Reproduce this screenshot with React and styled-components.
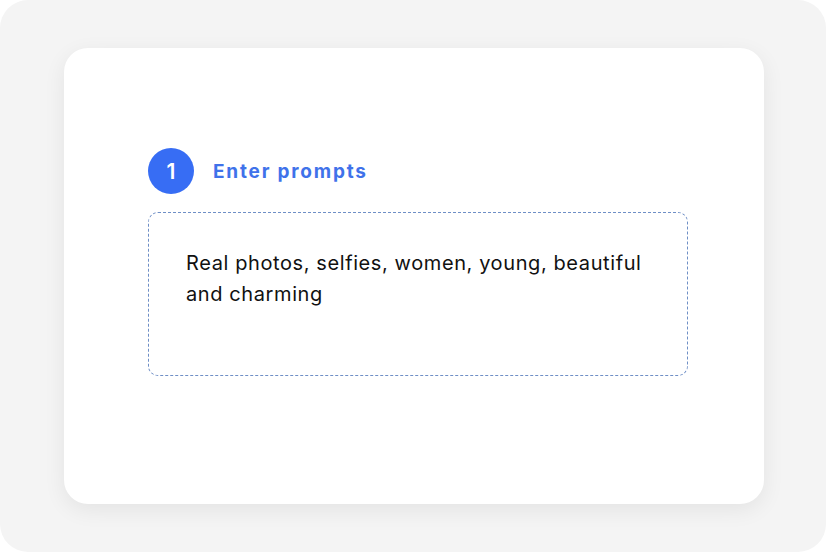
import React from "react";
import styled, { createGlobalStyle } from "styled-components";

const Global = createGlobalStyle`
  html, body { margin: 0; padding: 0; background: #ffffff; }
  body { font-family: Inter, "Noto Sans", sans-serif; }
`;

const Frame = styled.div`
  width: 826px;
  height: 552px;
  box-sizing: border-box;
  background: #f4f4f4;
  border-radius: 28px;
  padding: 48px 62px 48px 64px;
  display: flex;
`;

const Card = styled.div`
  width: 700px;
  height: 456px;
  box-sizing: border-box;
  background: #ffffff;
  border-radius: 24px;
  box-shadow: 0 6px 22px rgba(0, 0, 0, 0.07);
  padding: 100px 76px 0 84px;
  display: flex;
  flex-direction: column;
  gap: 18px;
`;

const StepHeader = styled.div`
  display: flex;
  align-items: center;
  gap: 19px;
`;

const StepBadge = styled.div`
  width: 46px;
  height: 46px;
  border-radius: 50%;
  background: #376df4;
  color: #ffffff;
  display: flex;
  align-items: center;
  justify-content: center;
  font-size: 21px;
  font-weight: 600;
`;

const StepTitle = styled.div`
  color: #3f72ea;
  font-size: 19px;
  font-weight: 700;
  letter-spacing: 1.8px;
`;

const PromptBox = styled.div`
  width: 540px;
  height: 164px;
  box-sizing: border-box;
  border: 1px dashed #6f8fc6;
  border-radius: 10px;
  padding: 35px 30px 0 37px;
  font-size: 20px;
  line-height: 31px;
  letter-spacing: 0.6px;
  color: #111111;
`;

export default function App() {
  return (
    <>
      <Global />
      <Frame>
        <Card>
          <StepHeader>
            <StepBadge>1</StepBadge>
            <StepTitle>Enter prompts</StepTitle>
          </StepHeader>
          <PromptBox>
            Real photos, selfies, women, young, beautiful and charming
          </PromptBox>
        </Card>
      </Frame>
    </>
  );
}
